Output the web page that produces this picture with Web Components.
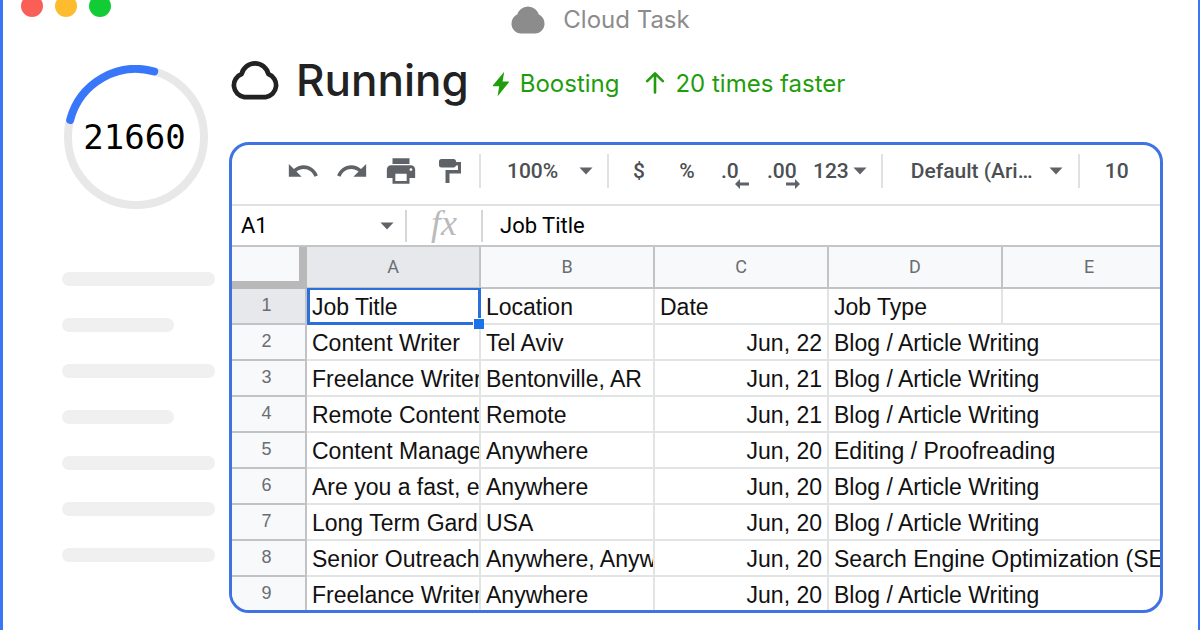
<!DOCTYPE html>
<html lang="en">
<head>
<meta charset="utf-8">
<meta name="viewport" content="width=device-width, initial-scale=1">
<title>Cloud Task</title>
<style>
  html, body { height: 100%; margin: 0; }
  body { overflow: hidden; background: #fff; font-family: Inter, "Liberation Sans", sans-serif; color: #222; }
</style>
</head>
<body>
<task-window>
  <title-bar slot="bar">Cloud Task</title-bar>
  <progress-ring slot="side" value="21660"></progress-ring>
  <skeleton-list slot="side"></skeleton-list>
  <status-line slot="main">Running
    <status-badge slot="badge" icon="bolt">Boosting</status-badge>
    <status-badge slot="badge" icon="arrow">20 times faster</status-badge>
  </status-line>
  <sheet-card slot="main">
    <sheet-toolbar></sheet-toolbar>
    <formula-bar cell="A1" value="Job Title"></formula-bar>
    <sheet-grid></sheet-grid>
  </sheet-card>
</task-window>

<script>
const define = (name, html, setup) => {
  const template = document.createElement('template');
  template.innerHTML = html;
  customElements.define(name, class extends HTMLElement {
    constructor() {
      super();
      this.attachShadow({ mode: 'open' }).append(template.content.cloneNode(true));
    }
    connectedCallback() { if (setup) setup(this, this.shadowRoot); }
  });
};

define('cloud-icon', `
<style>
  :host { display: block; flex: none; width: 48px; color: inherit; }
  svg { display: block; width: 100%; }
  path { fill: none; stroke: currentColor; stroke-width: 4.4; stroke-linejoin: round; }
  :host([filled]) path { fill: currentColor; }
</style>
<svg viewBox="1.5 0.5 45 38.5" aria-hidden="true"><path d="M14 36.2A11.2 11.2 0 0 1 11.5 14.6A12.8 12.8 0 0 1 36.5 14.6A11.2 11.2 0 0 1 34 36.2Z"/></svg>`);

define('task-window', `
<style>
  :host { display: flex; flex-direction: column; box-sizing: border-box; height: 100vh;
    border: solid #3b76f6; border-width: 0 2px 0 3px; background: #fff; overflow: hidden; }
  .body { flex: 1; min-height: 0; display: grid; grid-template-columns: 226px minmax(0, 1fr); }
  aside { padding: 27px 14px 0 59px; }
  main { display: flex; flex-direction: column; min-height: 0; padding: 14px 35px 17px 0; }
</style>
<slot name="bar"></slot>
<div class="body">
  <aside><slot name="side"></slot></aside>
  <main><slot name="main"></slot></main>
</div>`);

define('title-bar', `
<style>
  :host { display: grid; grid-template-columns: 1fr auto 1fr; height: 38px; color: #8c8c8c; }
  .lights { display: flex; gap: 12px; margin: -5px 0 0 18px; }
  .lights i { width: 22px; height: 22px; border-radius: 50%; background: #fa5f57; }
  .lights i:nth-child(2) { background: #fdbc2e; }
  .lights i:nth-child(3) { background: #12cc35; }
  .title { display: flex; align-items: center; gap: 18px; font-size: 24px; line-height: 40px; }
  cloud-icon { width: 34px; }
</style>
<div class="lights"><i></i><i></i><i></i></div>
<div class="title"><cloud-icon filled></cloud-icon><slot></slot></div>`);

define('progress-ring', `
<style>
  :host { display: grid; place-items: center; width: 144px; height: 144px; margin-left: 2px; }
  svg, span { grid-area: 1 / 1; }
  circle, path { fill: none; stroke: #e8e8e8; stroke-width: 8; }
  path { stroke: #3876fa; stroke-linecap: round; }
  span { padding-right: 3px; font: 34px/40px "DejaVu Sans Mono", monospace; color: #000; }
</style>
<svg width="144" height="144" viewBox="0 0 144 144" aria-hidden="true">
  <circle cx="72" cy="72" r="68"/><path d="M6.2 54.9A68 68 0 0 1 90.2 6.5"/>
</svg>
<span></span>`, (el, root) => { root.querySelector('span').textContent = el.getAttribute('value'); });

define('skeleton-list', `
<style>
  :host { display: grid; gap: 32px; margin-top: 63px; }
  i { height: 14px; border-radius: 7px; background: #f0f0f0; }
  .short { width: 112px; }
</style>
<i></i><i class="short"></i><i></i><i class="short"></i><i></i><i></i><i></i>`);

define('status-line', `
<style>
  :host { display: flex; align-items: center; gap: 23px; margin: 0 0 34px 2px; color: #222; }
  .head { display: flex; align-items: center; gap: 17px; }
  h1 { margin: 0; font-size: 44px; line-height: 56px; font-weight: 500; }
  .badges { display: flex; gap: 26px; padding-top: 8px; }
</style>
<div class="head"><cloud-icon></cloud-icon><h1><slot></slot></h1></div>
<div class="badges"><slot name="badge"></slot></div>`);

define('status-badge', `
<style>
  :host { display: flex; align-items: center; gap: 10px; font-size: 24px; line-height: 32px; color: #1f9d0c; white-space: nowrap; }
  svg { display: none; flex: none; }
  :host([icon=bolt]) .bolt, :host([icon=arrow]) .arrow { display: block; }
</style>
<svg class="bolt" width="18" height="26" viewBox="0 0 18 26" aria-hidden="true"><path fill="currentColor" d="M12.2 0.8L1 14.3Q0.4 15.2 1.4 15.2H7.2L5.6 25.2L16.8 11.4Q17.4 10.5 16.3 10.5H10.6Z"/></svg>
<svg class="arrow" width="20" height="24" viewBox="0 0 20 24" aria-hidden="true"><path fill="none" stroke="currentColor" stroke-width="2.6" stroke-linecap="round" stroke-linejoin="round" d="M10 20.4V1.6M2.2 9.2L10 1.4L17.8 9.2"/></svg>
<slot></slot>`);

define('sheet-card', `
<style>
  :host { flex: 1; min-height: 0; display: flex; flex-direction: column; box-sizing: border-box;
    border: 3px solid #3f72e2; border-radius: 20px; overflow: hidden; background: #fff; }
</style>
<slot></slot>`);

const caret = '<svg class="caret" width="14" height="8" viewBox="0 0 14 8" aria-hidden="true"><path fill="#5f6368" d="M0.5 0.5H13.5L7 7.5Z"/></svg>';

define('sheet-toolbar', `
<style>
  :host { display: flex; align-items: center; flex: none; box-sizing: border-box; height: 61px; padding: 0 0 8px 54px;
    border-bottom: 2px solid #dfe1e5; color: #4c4f53; font: 500 21px/28px Roboto, sans-serif; overflow: hidden; }
  button, select, input { appearance: none; border: 0; padding: 0; margin: 0; background: none; color: inherit; font: inherit; }
  button { flex: none; display: flex; align-items: center; justify-content: center; }
  .icons { display: flex; gap: 15px; margin-right: 12px; }
  .icons button { width: 34px; height: 34px; }
  .icons svg { fill: #5f6368; }
  hr { flex: none; width: 2px; height: 34px; margin: 0; border: 0; background: #dfe1e5; }
  .drop { flex: none; display: flex; align-items: center; }
  .zoom { margin: 0 14px 0 26px; }
  .zoom select { width: 72px; }
  .format { display: flex; margin: 0 14px 0 6px; }
  .format button { width: 48px; }
  .format .places { position: relative; justify-content: flex-start; box-sizing: border-box; }
  .format .one { width: 42px; padding-left: 10px; }
  .format .two { padding-left: 14px; }
  .places svg { position: absolute; right: 4px; top: 22px; }
  .two svg { right: 1px; }
  .format .number { width: auto; gap: 4px; margin-left: 12px; }
  .font { margin: 0 15px 0 28px; }
  .font select { width: 138px; }
  input { flex: none; width: 40px; margin-left: 25px; }
</style>
<div class="icons">
  <button aria-label="Undo"><svg width="34" height="34" viewBox="0 0 24 24"><path d="M12.5 8c-2.65 0-5.05.99-6.9 2.6L2 7v9h9l-3.62-3.62c1.39-1.16 3.16-1.88 5.12-1.88 3.54 0 6.55 2.31 7.6 5.5l2.37-.78C21.08 11.03 17.15 8 12.5 8z"/></svg></button>
  <button aria-label="Redo"><svg width="34" height="34" viewBox="0 0 24 24"><path d="M18.4 10.6C16.55 8.99 14.15 8 11.5 8c-4.65 0-8.58 3.03-9.96 7.22L3.9 16c1.05-3.19 4.05-5.5 7.6-5.5 1.95 0 3.73.72 5.12 1.88L13 16h9V7l-3.6 3.6z"/></svg></button>
  <button aria-label="Print"><svg width="34" height="34" viewBox="0 0 24 24"><path d="M19 8H5c-1.66 0-3 1.34-3 3v6h4v4h12v-4h4v-6c0-1.66-1.34-3-3-3zm-3 11H8v-5h8v5zm3-7c-.55 0-1-.45-1-1s.45-1 1-1 1 .45 1 1-.45 1-1 1zm-1-9H6v4h12V3z"/></svg></button>
  <button aria-label="Paint format"><svg width="24" height="24" viewBox="0 0 24 24"><path d="M3.5 0H15.5A2.5 2.5 0 0 1 18 2.5V3H23V14.5H11.5V24H7.5V11H20V6.5H18A2.5 2.5 0 0 1 15.5 8.5H3.5A2.5 2.5 0 0 1 1 6V2.5A2.5 2.5 0 0 1 3.5 0Z"/></svg></button>
</div>
<hr>
<label class="drop zoom"><select aria-label="Zoom"><option>100%</option></select>${caret}</label>
<hr>
<div class="format">
  <button aria-label="Currency">$</button>
  <button aria-label="Percent">%</button>
  <button class="places one" aria-label="Fewer decimals">.0<svg width="14" height="10" viewBox="0 0 14 10"><path fill="#5f6368" d="M0 5L5 0V3.5H14V6.5H5V10Z"/></svg></button>
  <button class="places two" aria-label="More decimals">.00<svg width="14" height="10" viewBox="0 0 14 10"><path fill="#5f6368" d="M14 5L9 0V3.5H0V6.5H9V10Z"/></svg></button>
  <button class="number" aria-label="More formats">123${caret}</button>
</div>
<hr>
<label class="drop font"><select aria-label="Font"><option>Default (Ari…</option></select>${caret}</label>
<hr>
<input aria-label="Font size" value="10">`);

define('formula-bar', `
<style>
  :host { display: flex; align-items: center; flex: none; box-sizing: border-box; height: 41px; border-bottom: 2px solid #c4c5c7;
    color: #000; font: 22px/28px Roboto, sans-serif; }
  input { border: 0; padding: 0; margin: 0; background: none; color: inherit; font: inherit; min-width: 0; }
  .name { flex: none; width: 139px; margin-left: 9px; }
  .caret { flex: none; margin-right: 11px; }
  hr { flex: none; width: 2px; height: 32px; margin: 0; border: 0; background: #d5d6d8; }
  .fx { flex: none; width: 74px; padding-bottom: 6px; text-align: center; font: italic 36px/32px "Liberation Serif", serif; color: #b9babc; }
  .value { flex: 1; margin-left: 17px; }
</style>
<input class="name" aria-label="Cell">${caret}<hr><span class="fx">fx</span><hr><input class="value" aria-label="Formula">`,
(el, root) => {
  root.querySelector('.name').value = el.getAttribute('cell');
  root.querySelector('.value').value = el.getAttribute('value');
});

const rows = [
  ['Content Writer', 'Tel Aviv', 'Jun, 22', 'Blog / Article Writing'],
  ['Freelance Writer', 'Bentonville, AR', 'Jun, 21', 'Blog / Article Writing'],
  ['Remote Content', 'Remote', 'Jun, 21', 'Blog / Article Writing'],
  ['Content Manage', 'Anywhere', 'Jun, 20', 'Editing / Proofreading'],
  ['Are you a fast, e', 'Anywhere', 'Jun, 20', 'Blog / Article Writing'],
  ['Long Term Gard', 'USA', 'Jun, 20', 'Blog / Article Writing'],
  ['Senior Outreach', 'Anywhere, Anyw', 'Jun, 20', 'Search Engine Optimization (SE'],
  ['Freelance Writer', 'Anywhere', 'Jun, 20', 'Blog / Article Writing']
];

define('sheet-grid', `
<style>
  :host { display: block; flex: 1; min-height: 0; overflow: hidden; }
  table { table-layout: fixed; width: 945px; min-width: 100%; border-collapse: separate; border-spacing: 0;
    font: 23px/32px "Liberation Sans", Arial, sans-serif; color: #111; }
  col.index { width: 75px; }
  col.data { width: 174px; }
  th, td { box-sizing: border-box; padding: 0; border: solid #e2e3e3; border-width: 0 2px 2px 0; white-space: nowrap; }
  td { height: 36px; padding: 2px 5px 0; text-align: left; }
  td > div { overflow: hidden; }
  td.date { text-align: right; }
  th { background: #f8f9fb; border-color: #c2c3c5; color: #6a6d71; font: 18px/32px Roboto, sans-serif; }
  thead th { height: 42px; line-height: 40px; }
  tbody th { padding: 0 4px 2px 0; font-family: "Liberation Sans", sans-serif; }
  th.on { background: #e6e8ec; }
  th.corner { border: solid #b8b8b8; border-width: 0 8px 8px 0; }
  td.text { padding-right: 0; }
  td.active { position: relative; }
  td.active::before { content: ""; position: absolute; inset: -1px -2px -2px 0; border: 3px solid #2a6fdb; border-top-width: 2px; }
  td.active::after { content: ""; position: absolute; right: -5px; bottom: -6px; width: 10px; height: 10px; background: #1a73e8; border: solid #fff; border-width: 1px 0 0 1px; z-index: 1; }
</style>
<table>
  <colgroup><col class="index"><col class="data"><col class="data"><col class="data"><col class="data"><col></colgroup>
  <thead><tr><th class="corner"></th><th class="on">A</th><th>B</th><th>C</th><th>D</th><th>E</th></tr></thead>
  <tbody><tr><th class="on">1</th><td class="active text"><div>Job Title</div></td><td class="text"><div>Location</div></td><td class="text"><div>Date</div></td><td class="text"><div>Job Type</div></td><td></td></tr></tbody>
</table>`, (el, root) => {
  const body = root.querySelector('tbody');
  rows.forEach((cells, i) => {
    const tr = body.insertRow();
    const th = document.createElement('th');
    th.textContent = i + 2;
    tr.append(th);
    cells.forEach((text, c) => {
      const td = tr.insertCell();
      td.className = c === 2 ? 'date' : 'text';
      if (c === 3) td.colSpan = 2;
      const div = document.createElement('div');
      div.textContent = text;
      td.append(div);
    });
  });
});
</script>
</body>
</html>
